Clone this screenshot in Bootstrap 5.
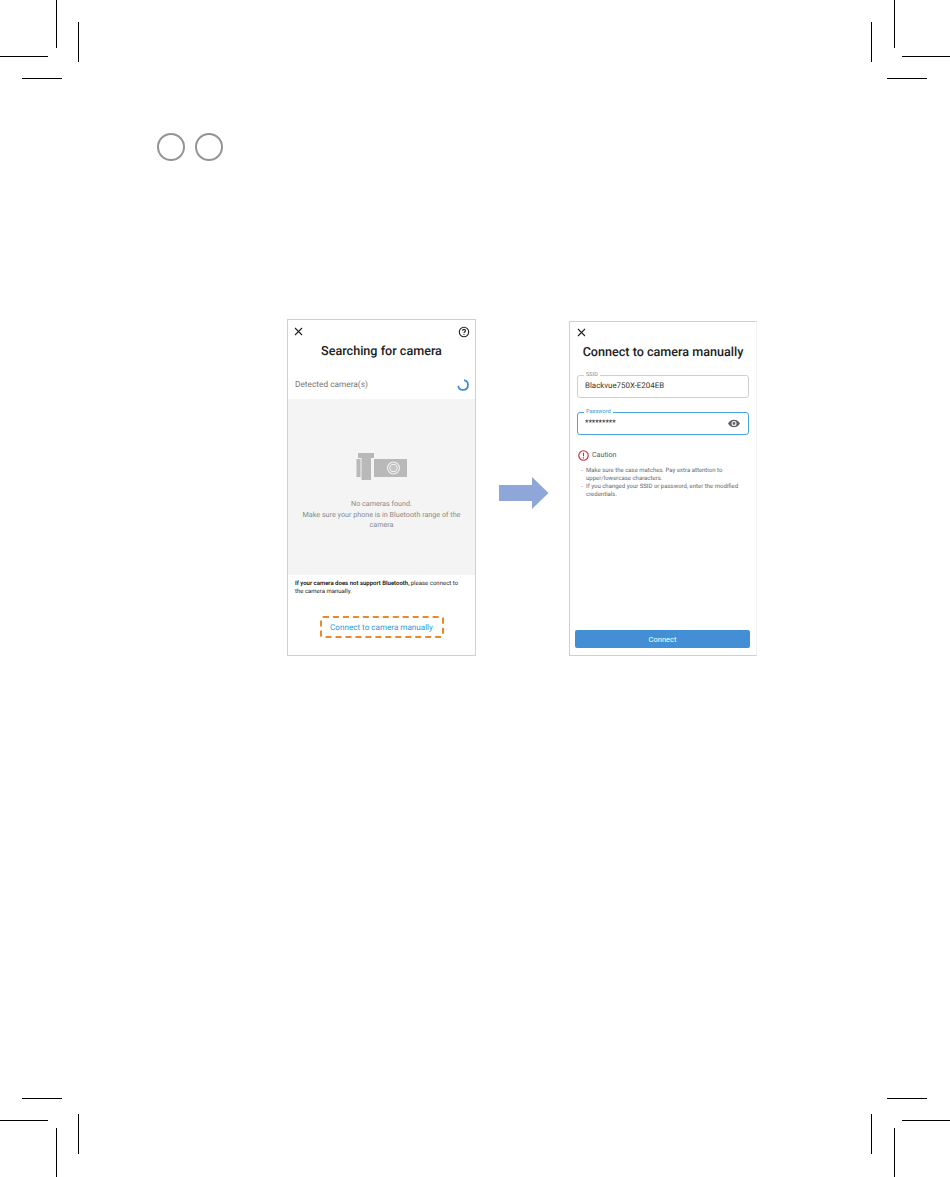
<!DOCTYPE html>
<html lang="en">
<head>
<meta charset="utf-8">
<title>Connect to camera manually</title>
<link href="https://cdn.jsdelivr.net/npm/bootstrap@5.3.0/dist/css/bootstrap.min.css" rel="stylesheet">
<style>
html,body{margin:0;background:#fff;}
.sheet{position:relative;width:950px;height:1177px;overflow:hidden;font-family:Roboto,"Liberation Sans",sans-serif;text-rendering:geometricPrecision;}
.marks{position:absolute;inset:0;}
.steps{padding:133px 0 0 157px;gap:10px;}
.stepdot{width:28px;height:28px;border:2px solid #949494;border-radius:50%;}
.screens{padding:158px 0 0 287px;}
.phone{width:189px;height:337px;background:#fff;border:1px solid #d0d0d0;}
.phone-b{width:188px;height:335px;margin-top:2px;border-right-color:#f2f2f2;}
.gapzone{width:93px;padding:158px 0 0 23px;}
.headbar{height:23px;padding:0 5px 0 6px;}
.headbar-b{height:20px;padding-left:7px;}
.ttl{font-size:12.6px;font-weight:500;color:#222;line-height:16px;text-align:center;margin-top:1px;}
.headbar-b + .ttl{margin-top:3px;}
.detected{height:30px;margin-top:9px;padding:2px 6px 0 7px;font-size:8.3px;color:#777;}
.emptyzone{height:176px;background:#f4f4f4;padding-top:54px;}
.emptytext{font-size:7.2px;line-height:10.7px;color:#8a8a8a;text-align:center;padding:0 12px;margin-top:19px;}
.note{font-size:6px;line-height:8.2px;color:#222;padding:5px 7px 0;margin:0;}
.note b{font-weight:500;color:#000;margin-right:.2em;}
.manualbtn{display:block;width:124px;height:22px;line-height:18px;margin:20px auto 0;border:2px dashed #e8892c;border-radius:3px;font-size:8.1px;color:#2f9ad8;text-align:center;}
.fieldbox{position:relative;height:23px;margin:14px 7px 0;border:1px solid #cfcfcf;border-radius:3px;padding:0 7px;font-size:7.9px;color:#333;line-height:20px;}
.fieldbox.on{border-color:#4aa5dc;color:#222;}
.flabel{position:absolute;left:6px;top:-4px;padding:0 2px;background:#fff;font-size:5.6px;line-height:7px;color:#8e8e8e;}
.on .flabel{color:#2f9ad8;}
.eye{position:absolute;right:8px;top:6px;}
.cauttl{font-size:7.1px;color:#555;gap:3px;padding:0 0 0 8px;margin-top:15px;}
.caulist{list-style:none;margin:6px 0 0;padding:0 8px 0 16px;font-size:6px;line-height:8px;color:#666;}
.caulist li{position:relative;}
.caulist li::before{content:"-";position:absolute;left:-5px;}
.connectbtn{width:175px;height:18px;margin:0 0 7px 5px;background:#428fd6;border:0;border-radius:2px;color:#fff;font-size:7.5px;padding:1px 0 0;line-height:17px;}
</style>
</head>
<body>
<div class="sheet">
  <svg class="marks" width="950" height="1177" viewBox="0 0 950 1177" fill="none" stroke="#000" stroke-width="1">
    <path d="M56.5 0V48M78.5 22V62M0 56.5H48M22 78.5H62"/>
    <path d="M894.5 0V48M871.5 22V62M902 56.5H950M887 78.5H927"/>
    <path d="M22 1098.5H62M0 1120.5H48M56.5 1128V1177M78.5 1114V1154"/>
    <path d="M887 1098.5H927M902 1120.5H950M871.5 1114V1154M894.5 1128V1177"/>
  </svg>

  <div class="steps d-flex">
    <div class="stepdot"></div>
    <div class="stepdot"></div>
  </div>

  <div class="screens d-flex align-items-start">
    <div class="phone d-flex flex-column">
      <div class="headbar d-flex justify-content-between align-items-center">
        <svg width="9" height="9" viewBox="0 0 9 9" stroke="#222" stroke-width="1.1" fill="none"><path d="M1 1L8 8M8 1L1 8"/></svg>
        <svg width="12" height="12" viewBox="0 0 12 12" fill="none" stroke="#222" stroke-width="1.1"><circle cx="6" cy="6" r="4.7"/><path d="M4.5 4.8C4.5 3.9 5.2 3.4 6 3.4C6.9 3.4 7.5 3.9 7.5 4.7C7.5 5.7 6 5.8 6 7"/><path d="M6 7.9V8.9"/></svg>
      </div>
      <div class="ttl">Searching for camera</div>
      <div class="detected d-flex justify-content-between align-items-center">
        <span>Detected camera(s)</span>
        <svg width="12" height="12" viewBox="0 0 12 12" fill="none" stroke="#3d8fd1" stroke-width="1.8"><path d="M7 1.200A4.900 4.900 0 1 1 1.200 6.800"/></svg>
      </div>
      <div class="emptyzone">
        <svg class="d-block mx-auto" width="52" height="27" viewBox="0 0 52 27" fill="#b9b9b9"><path d="M0.500 6H4.500V24H0.500Z"/><path d="M2 0H18V5H15V27H5.500V5H2Z"/><path fill-rule="evenodd" d="M18 6H51V24H18ZM37.500 8.500A6.500 6.500 0 1 0 37.501 21.500A6.500 6.500 0 1 0 37.500 8.500Z"/><circle cx="37.500" cy="15" r="4.800" fill="none" stroke="#b9b9b9" stroke-width="1.200"/><circle cx="37.500" cy="15" r="3.200" fill="#c4c4c4"/></svg>
        <div class="emptytext">No cameras found.<br>Make sure your phone is in Bluetooth range of the camera</div>
      </div>
      <div class="note">
        <div class="d-flex"><b>If your camera does not support Bluetooth,</b><span>please connect to</span></div>
        <div>the camera manually.</div>
      </div>
      <a class="manualbtn text-decoration-none">Connect to camera manually</a>
    </div>

    <div class="gapzone d-flex justify-content-start">
      <svg width="50" height="32" viewBox="0 0 50 32" fill="#8fa6d8"><path d="M0 8H33V0L49.500 16L33 32V24H0Z"/></svg>
    </div>

    <div class="phone phone-b d-flex flex-column">
      <div class="headbar headbar-b d-flex align-items-center">
        <svg width="9" height="9" viewBox="0 0 9 9" stroke="#222" stroke-width="1.1" fill="none"><path d="M1 1L8 8M8 1L1 8"/></svg>
      </div>
      <div class="ttl">Connect to camera manually</div>
      <div class="fieldbox">
        <span class="flabel">SSID</span>Blackvue750X-E204EB
      </div>
      <div class="fieldbox on">
        <span class="flabel">Password</span>*********
        <svg class="eye" width="12" height="9" viewBox="0 0 12 9"><path fill="#5f6368" fill-rule="evenodd" d="M6 .8C3.300.8 1.200 2.300 0 4.500C1.200 6.700 3.300 8.200 6 8.200S10.800 6.700 12 4.500C10.800 2.300 8.700.8 6 .8ZM6 2A2.500 2.500 0 1 1 6 7A2.500 2.500 0 1 1 6 2Z"/><circle cx="6" cy="4.500" r="1.400" fill="#5f6368"/></svg>
      </div>
      <div class="cauttl d-flex align-items-center">
        <svg width="11" height="11" viewBox="0 0 11 11" fill="none"><circle cx="5.500" cy="5.500" r="4.700" stroke="#d2232f" stroke-width="1.100"/><path d="M5.500 2.700V6.300M5.500 7.300V8.400" stroke="#d2232f" stroke-width="1.100"/></svg>
        <span>Caution</span>
      </div>
      <ul class="caulist">
        <li>Make sure the case matches. Pay extra attention to upper/lowercase characters.</li>
        <li>If you changed your SSID or password, enter the modified credentials.</li>
      </ul>
      <button class="connectbtn btn mt-auto" type="button">Connect</button>
    </div>
  </div>
</div>
<script src="https://cdn.jsdelivr.net/npm/bootstrap@5.3.0/dist/js/bootstrap.bundle.min.js"></script>
</body>
</html>
